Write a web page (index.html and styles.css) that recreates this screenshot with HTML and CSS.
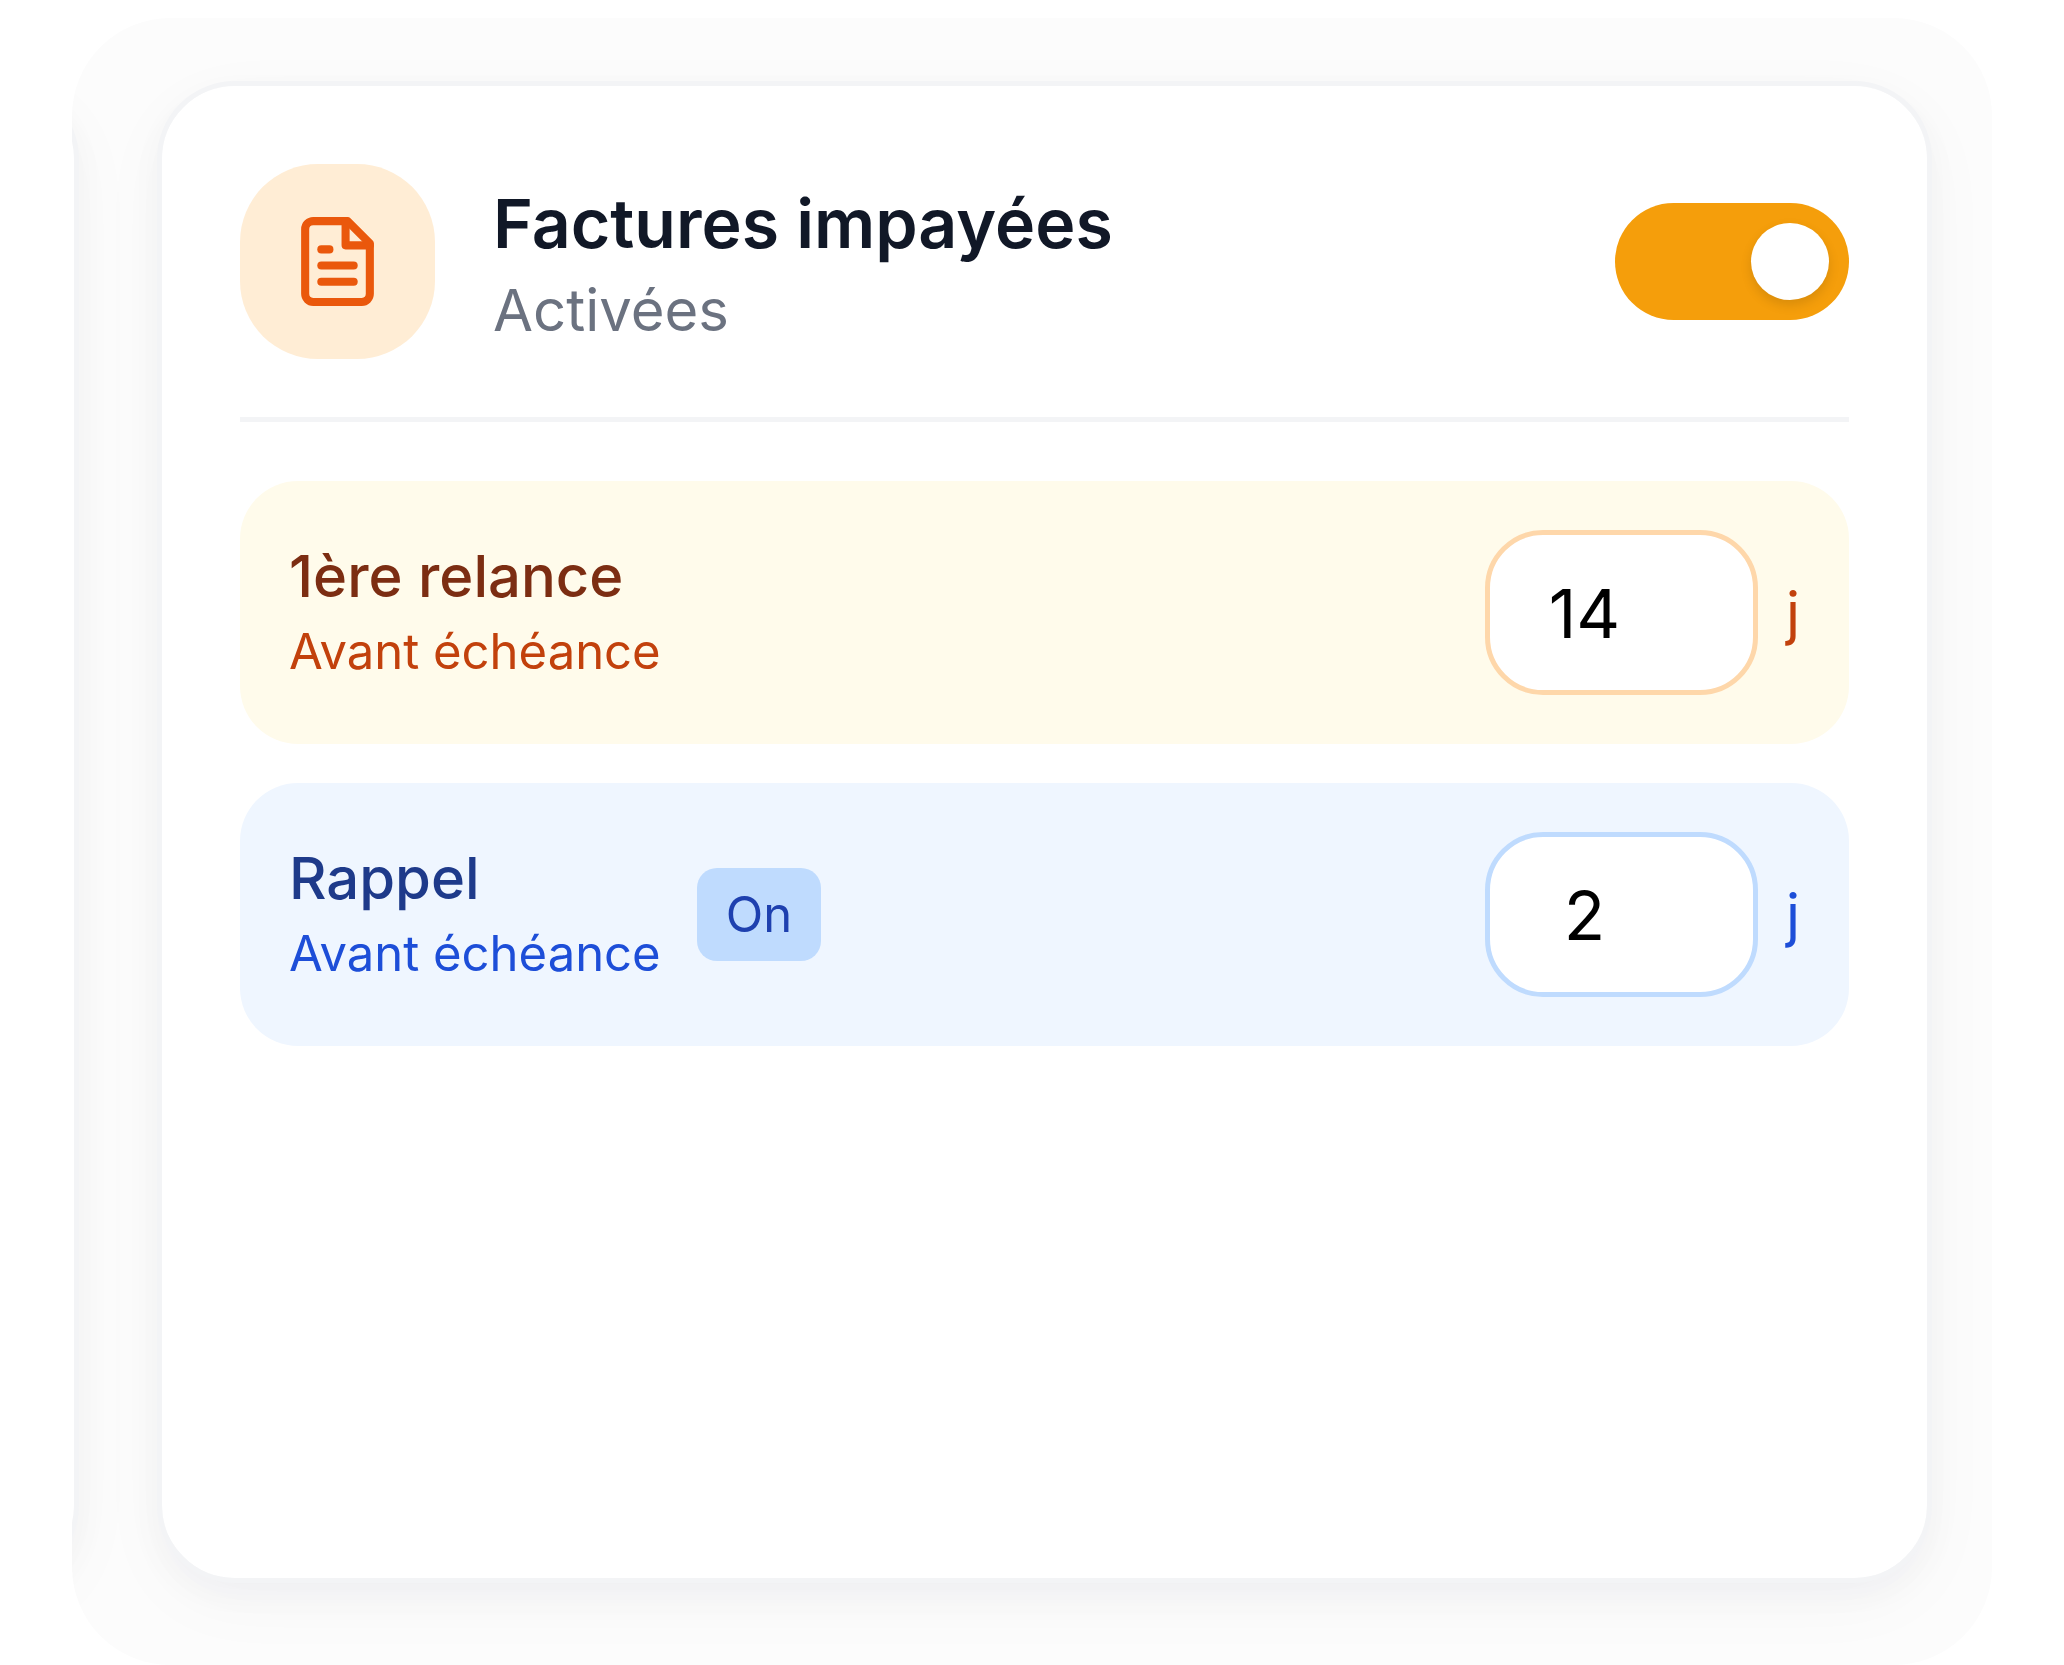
FILE: index.html
```html
<!DOCTYPE html>
<html lang="fr">
<head>
  <meta charset="utf-8">
  <meta name="viewport" content="width=device-width, initial-scale=1">
  <title>Factures impayées</title>
  <link rel="stylesheet" href="styles.css">
</head>
<body>
  <main class="carousel">
    <div class="card" aria-hidden="true"></div>

    <section class="card">
      <header class="card-header">
        <span class="card-icon">
          <svg viewBox="0 0 24 24" fill="none" stroke="currentColor" stroke-width="2" stroke-linecap="round" stroke-linejoin="round" aria-hidden="true">
            <path d="M14.5 2H6a2 2 0 0 0-2 2v16a2 2 0 0 0 2 2h12a2 2 0 0 0 2-2V7.5L14.5 2z"/>
            <polyline points="14 2 14 8 20 8"/>
            <line x1="16" y1="13" x2="8" y2="13"/>
            <line x1="16" y1="17" x2="8" y2="17"/>
            <line x1="10" y1="9" x2="8" y2="9"/>
          </svg>
        </span>
        <div class="card-heading">
          <h1 class="card-title" id="card-title">Factures impayées</h1>
          <p class="card-status">Activées</p>
        </div>
        <input class="switch" type="checkbox" role="switch" aria-labelledby="card-title" checked>
      </header>

      <div class="reminders">
        <div class="reminder reminder-first">
          <label class="reminder-label" for="first-days">
            <span class="reminder-name">1ère relance</span>
            <span class="reminder-when">Avant échéance</span>
          </label>
          <div class="reminder-delay">
            <input class="days" id="first-days" type="number" value="14">
            <span class="unit">j</span>
          </div>
        </div>

        <div class="reminder reminder-second">
          <label class="reminder-label" for="second-days">
            <span class="reminder-name">Rappel</span>
            <span class="reminder-when">Avant échéance</span>
          </label>
          <button class="badge" type="button">On</button>
          <div class="reminder-delay">
            <input class="days" id="second-days" type="number" value="2">
            <span class="unit">j</span>
          </div>
        </div>
      </div>
    </section>
  </main>
</body>
</html>
```

FILE: styles.css
```css
*,
*::before {
  box-sizing: border-box;
}

body {
  margin: 0;
  padding: 18px 72px 0;
  background: #fff;
  color: #111827;
  font-family: Inter, "Liberation Sans", sans-serif;
}

h1,
p {
  margin: 0;
}

/* The previous card stays partly visible past the left edge. */
.carousel {
  display: flex;
  justify-content: flex-end;
  gap: 78px;
  min-height: calc(100vh - 18px);
  padding: 63px 60px 82px 0;
  overflow: hidden;
  border-radius: 98px;
  background: #fcfcfc;
}

.card {
  flex: 0 0 calc(100% - 85px);
  padding: 78px;
  border: 5px solid #f3f4f6;
  border-radius: 78px;
  background: #fff;
  background-clip: padding-box;
  box-shadow: 0 20px 72px rgba(30, 41, 70, 0.03), 0 12px 32px rgba(30, 41, 70, 0.03);
}

.card-header {
  display: flex;
  align-items: center;
  gap: 58px;
  padding-bottom: 58px;
  border-bottom: 5px solid #f3f4f6;
}

.card-icon {
  display: grid;
  flex: none;
  place-items: center;
  width: 195px;
  height: 195px;
  border-radius: 78px;
  background: #ffedd5;
  color: #ea580c;
}

.card-icon svg {
  width: 97px;
  height: 97px;
}

.card-heading {
  flex: 1;
}

.card-title {
  font-size: 68px;
  font-weight: 600;
  line-height: 96px;
}

.card-status {
  color: #6b7280;
  font-size: 58px;
  line-height: 78px;
}

.switch {
  appearance: none;
  flex: none;
  display: flex;
  justify-content: flex-start;
  width: 234px;
  height: 117px;
  margin: 0;
  padding: 20px;
  border-radius: 999px;
  background: #d1d5db;
  cursor: pointer;
}

.switch:checked {
  justify-content: flex-end;
  background: #f59e0b;
}

.switch::before {
  content: "";
  width: 78px;
  border-radius: 50%;
  background: #fff;
  box-shadow: 0 5px 12px rgba(0, 0, 0, 0.12);
}

.reminders {
  display: flex;
  flex-direction: column;
  gap: 39px;
  padding-top: 59px;
}

.reminder {
  display: flex;
  align-items: center;
  gap: 36px;
  padding: 49px;
  border-radius: 58px;
}

.reminder-label {
  display: flex;
  flex-direction: column;
}

.reminder-name {
  font-size: 58px;
  font-weight: 500;
  line-height: 78px;
}

.reminder-when {
  font-size: 49px;
  line-height: 73px;
}

.reminder-delay {
  display: flex;
  align-items: center;
  gap: 28px;
  margin-left: auto;
}

.days {
  appearance: textfield;
  width: 273px;
  height: 165px;
  padding: 0 74px 0 0;
  border: 5px solid;
  border-radius: 58px;
  background: #fff;
  color: #000;
  font: inherit;
  font-size: 68px;
  text-align: center;
}

.days::-webkit-inner-spin-button {
  display: none;
}

.unit {
  font-size: 58px;
  line-height: 78px;
}

.badge {
  padding: 10px 29px;
  border: 0;
  border-radius: 20px;
  background: #bfdbfe;
  color: #1e40af;
  font: inherit;
  font-size: 49px;
  line-height: 73px;
}

.reminder-first {
  background: #fffbeb;
  color: #c2410c;
}

.reminder-first .reminder-name {
  color: #7c2d12;
}

.reminder-first .days {
  border-color: #fed7aa;
}

.reminder-second {
  background: #eff6ff;
  color: #1d4ed8;
}

.reminder-second .reminder-name {
  color: #1e3a8a;
}

.reminder-second .days {
  border-color: #bfdbfe;
}
```
